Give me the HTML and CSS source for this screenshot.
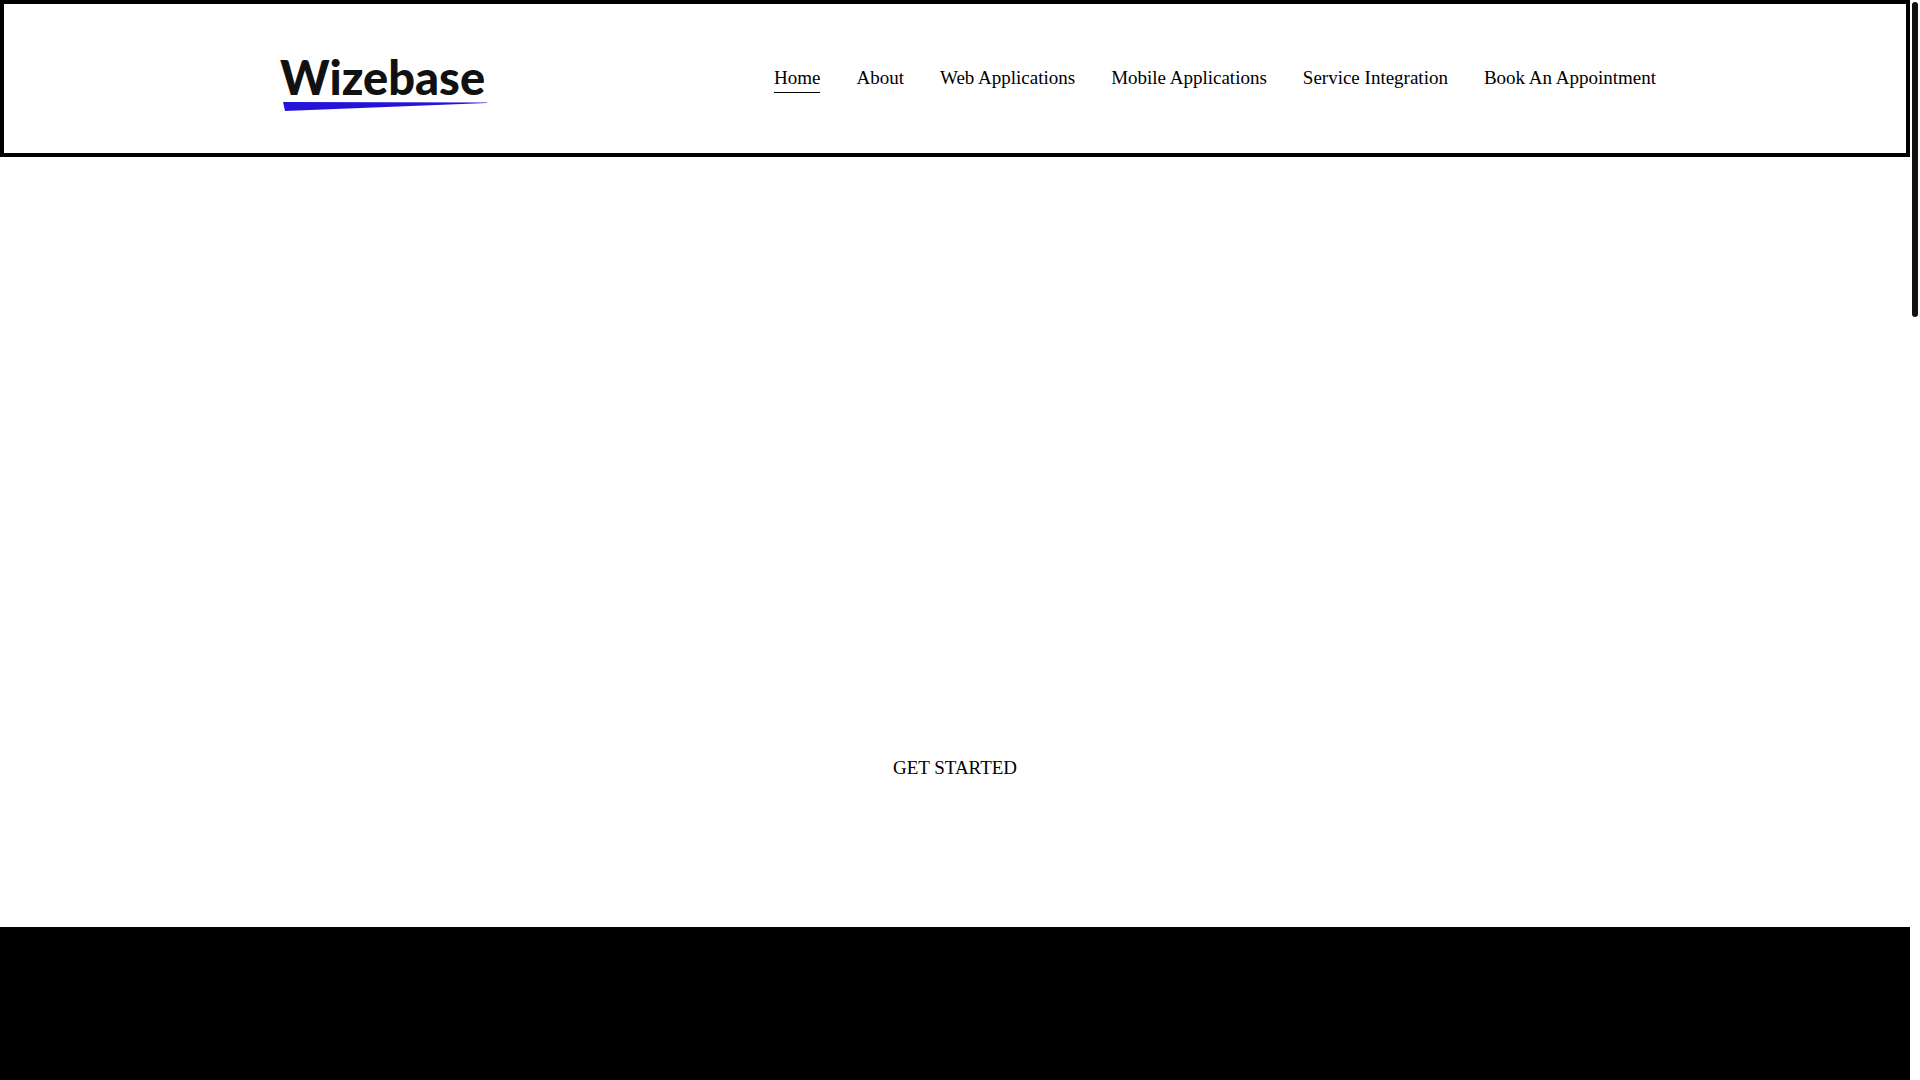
FILE: index.html
```html
<!DOCTYPE html>
<html lang="en">
<head>
    <meta charset="UTF-8">
    <meta name="viewport" content="width=device-width, initial-scale=1.0">
    <title>Wizebase</title>
    <link rel="stylesheet" href="styles.css">
</head>
<body>
    <div class="page">
        <header class="header">
            <a class="logo" href="#">
                <span class="logo-name">Wizebase</span>
                <svg class="logo-line" viewBox="0 0 204 9" aria-hidden="true">
                    <path d="M0 0L204 0.4V1L2 9Z" fill="#2414d9"/>
                </svg>
            </a>
            <nav class="nav">
                <a class="active" href="#">Home</a>
                <a href="#">About</a>
                <a href="#">Web Applications</a>
                <a href="#">Mobile Applications</a>
                <a href="#">Service Integration</a>
                <a href="#">Book An Appointment</a>
            </nav>
        </header>
        <main class="main">
            <section class="hero">
                <a class="cta" href="#">GET STARTED</a>
            </section>
            <section class="dark"></section>
        </main>
    </div>
    <div class="scrollbar">
        <div class="thumb"></div>
    </div>
</body>
</html>
```
FILE: styles.css
```css
* {
    box-sizing: border-box;
}
body {
    margin: 0;
    display: flex;
    height: 100vh;
    overflow: hidden;
    background-color: #fff;
    font-family: "Liberation Serif", serif;
    font-size: 19px;
    line-height: 24px;
    color: #000;
}
a {
    color: inherit;
    text-decoration: none;
}
.page {
    flex: 1;
    display: flex;
    flex-direction: column;
}
.header {
    display: flex;
    justify-content: space-between;
    align-items: flex-start;
    padding: 52px 250px 42px 276px;
    border: 4px solid #000;
}
.logo {
    display: flex;
    flex-direction: column;
    gap: 4px;
    color: #111;
}
.logo-name {
    font-family: Lato, sans-serif;
    font-size: 47px;
    font-weight: 900;
    line-height: 42px;
}
.logo-line {
    width: 204px;
    height: 9px;
    margin-left: 3px;
}
.nav {
    display: flex;
    gap: 36px;
    padding-top: 10px;
}
.nav a {
    padding-bottom: 2px;
    border-bottom: 1px solid transparent;
}
.nav .active {
    border-bottom-color: #000;
}
.main {
    flex: 1;
    display: flex;
    flex-direction: column;
}
.hero {
    display: flex;
    justify-content: center;
    padding: 599px 0 147px;
}
.dark {
    flex: 1;
    background-color: #000;
}
/* Custom scrollbar */
.scrollbar {
    width: 10px;
    padding: 2px;
}
.thumb {
    height: 315px;
    border-radius: 3px;
    background-color: #111;
}
```
